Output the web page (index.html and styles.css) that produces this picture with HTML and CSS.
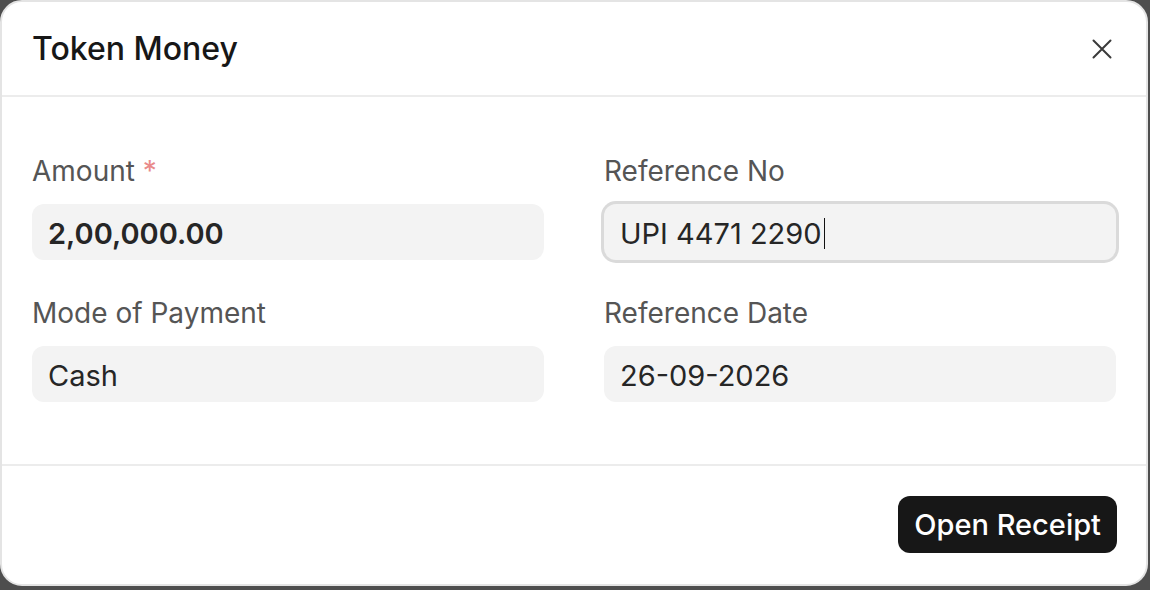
FILE: index.html
```html
<!DOCTYPE html>
<html lang="en">
<head>
<meta charset="utf-8">
<title>Token Money</title>
<link rel="stylesheet" href="styles.css">
</head>
<body>
<div class="dialog">
  <div class="header">
    <h2 class="title">Token Money</h2>
    <button class="close" aria-label="Close">
      <svg width="20" height="20" viewBox="0 0 20 20" fill="none" stroke="#3a3a3a" stroke-width="2" stroke-linecap="round"><path d="M1.5 1.5L18.5 18.5M18.5 1.5L1.5 18.5"/></svg>
    </button>
  </div>
  <div class="body">
    <div class="grid">
      <div class="field">
        <div class="label">Amount <span class="req">*</span></div>
        <div class="input strong">2,00,000.00</div>
      </div>
      <div class="field">
        <div class="label">Reference No</div>
        <div class="input focused">UPI 4471 2290<span class="caret"></span></div>
      </div>
      <div class="field">
        <div class="label">Mode of Payment</div>
        <div class="input">Cash</div>
      </div>
      <div class="field">
        <div class="label">Reference Date</div>
        <div class="input">26-09-2026</div>
      </div>
    </div>
  </div>
  <div class="footer">
    <button class="primary">Open Receipt</button>
  </div>
</div>
</body>
</html>
```

FILE: styles.css
```css
html, body {
  margin: 0;
  padding: 0;
}
body {
  background: #4e4e4e;
  width: 1150px;
  height: 590px;
  overflow: hidden;
  font-family: "Inter", "Noto Sans", sans-serif;
}
.dialog {
  width: 1148px;
  height: 586px;
  box-sizing: border-box;
  border: 2px solid #e4e4e4;
  border-radius: 22px;
  background: #ffffff;
  display: flex;
  flex-direction: column;
  overflow: hidden;
}
.header {
  height: 95px;
  box-sizing: border-box;
  border-bottom: 2px solid #ececec;
  display: flex;
  align-items: center;
  justify-content: space-between;
  padding: 0 30px;
}
.title {
  margin: 0;
  font-size: 32px;
  font-weight: 500;
  color: #171717;
}
.close {
  background: none;
  border: 0;
  padding: 0;
  width: 20px;
  height: 20px;
  margin-right: 4px;
  display: flex;
}
.body {
  flex: 1;
  padding: 57px 30px 0;
}
.grid {
  display: grid;
  grid-template-columns: 1fr 1fr;
  column-gap: 60px;
  row-gap: 36px;
}
.label {
  font-size: 28px;
  line-height: 34px;
  color: #555555;
  margin-bottom: 16px;
}
.req {
  color: #e98a8a;
}
.input {
  height: 56px;
  box-sizing: border-box;
  background: #f3f3f3;
  border-radius: 12px;
  padding: 2px 16px 0;
  display: flex;
  align-items: center;
  font-size: 29px;
  color: #262626;
}
.input.strong {
  font-weight: 600;
}
.input.focused {
  box-shadow: 0 0 0 3px #dadada;
}
.caret {
  display: inline-block;
  width: 1.5px;
  height: 31px;
  background: #111;
  margin-left: 2px;
}
.footer {
  border-top: 2px solid #ececec;
  padding: 30px 29px 31px;
  display: flex;
  justify-content: flex-end;
}
.primary {
  height: 57px;
  padding: 0 16px;
  border: 0;
  border-radius: 12px;
  background: #171717;
  color: #ffffff;
  font-family: "Inter", "Noto Sans", sans-serif;
  font-size: 29px;
  font-weight: 500;
}
```
